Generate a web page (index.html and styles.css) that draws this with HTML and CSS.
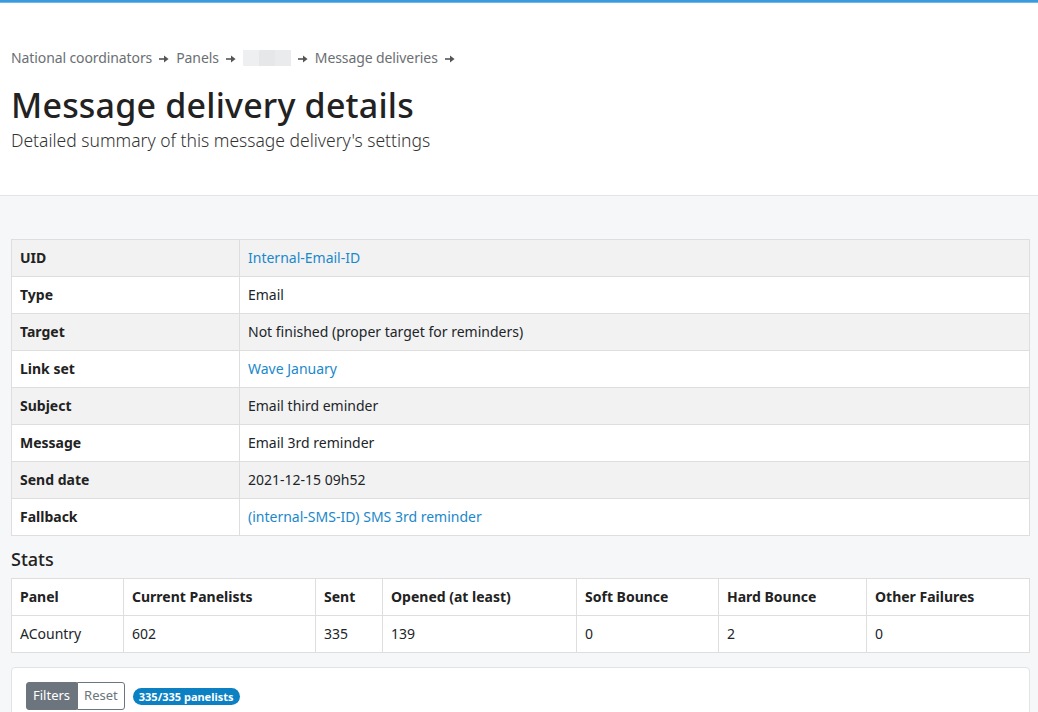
FILE: index.html
```html
<!DOCTYPE html>
<html lang="en">
<head>
<meta charset="utf-8">
<title>Message delivery details</title>
<link rel="stylesheet" href="styles.css">
</head>
<body>
<div class="topbar"></div>
<header class="hero">
  <nav class="breadcrumb">
    <a href="#">National coordinators</a><svg class="sep" viewBox="0 0 10 8"><path d="M0 4H6.5" /><path class="head" d="M5 0.6L9.6 4L5 7.4Z"/></svg>
    <a href="#">Panels</a><svg class="sep" viewBox="0 0 10 8"><path d="M0 4H6.5" /><path class="head" d="M5 0.6L9.6 4L5 7.4Z"/></svg>
    <span class="redacted"><i></i><i></i><i></i></span><svg class="sep" viewBox="0 0 10 8"><path d="M0 4H6.5" /><path class="head" d="M5 0.6L9.6 4L5 7.4Z"/></svg>
    <a href="#">Message deliveries</a><svg class="sep" viewBox="0 0 10 8"><path d="M0 4H6.5" /><path class="head" d="M5 0.6L9.6 4L5 7.4Z"/></svg>
  </nav>
  <h1 class="title">Message delivery details</h1>
  <p class="subtitle">Detailed summary of this message delivery's settings</p>
</header>
<main class="section">
  <table class="table details">
    <tbody>
      <tr><th>UID</th><td><a href="#">Internal-Email-ID</a></td></tr>
      <tr><th>Type</th><td>Email</td></tr>
      <tr><th>Target</th><td>Not finished (proper target for reminders)</td></tr>
      <tr><th>Link set</th><td><a href="#">Wave January</a></td></tr>
      <tr><th>Subject</th><td>Email third eminder</td></tr>
      <tr><th>Message</th><td>Email 3rd reminder</td></tr>
      <tr><th>Send date</th><td>2021-12-15 09h52</td></tr>
      <tr><th>Fallback</th><td><a href="#">(internal-SMS-ID) SMS 3rd reminder</a></td></tr>
    </tbody>
  </table>
  <h2 class="stats-title">Stats</h2>
  <table class="table stats">
    <thead>
      <tr><th>Panel</th><th>Current Panelists</th><th>Sent</th><th>Opened (at least)</th><th>Soft Bounce</th><th>Hard Bounce</th><th>Other Failures</th></tr>
    </thead>
    <tbody>
      <tr><td>ACountry</td><td>602</td><td>335</td><td>139</td><td>0</td><td>2</td><td>0</td></tr>
    </tbody>
  </table>
  <div class="card">
    <div class="toolbar">
      <div class="btn-group">
        <button class="btn btn-dark">Filters</button><button class="btn btn-outline">Reset</button>
      </div>
      <span class="badge">335/335 panelists</span>
    </div>
  </div>
</main>
</body>
</html>
```
FILE: styles.css
```css
* { box-sizing: border-box; }
html, body { margin: 0; padding: 0; }
body {
  font-family: "Noto Sans", "Open Sans", sans-serif;
  font-size: 14px;
  color: #212529;
  background: #f6f7f9;
  min-height: 712px;
  overflow: hidden;
}
a { color: #1a88cb; text-decoration: none; }

.topbar {
  height: 3px;
  background: #3a9bdc;
  border-bottom: 1px solid #6fb8e8;
}

.hero {
  background: #fff;
  border-bottom: 1px solid #e1e3e7;
  padding: 45px 11px 44px;
}
.breadcrumb {
  display: flex;
  align-items: center;
  line-height: 20px;
  font-size: 14px;
  color: #6b6f73;
  letter-spacing: -0.1px;
}
.breadcrumb a { color: #6b6f73; }
.breadcrumb .sep {
  width: 10px;
  height: 8px;
  margin: 1px 7px 0;
  flex: none;
}
.breadcrumb .sep path { stroke: #555; stroke-width: 1.6; fill: none; }
.breadcrumb .sep path.head { fill: #555; stroke: none; }
.redacted { display: inline-flex; height: 16px; }
.redacted i { display: block; width: 16px; height: 16px; background: #eeeff0; }
.redacted i:nth-child(2) { background: #e6e7e9; }
.redacted i:nth-child(3) { background: #eaebed; }

.title {
  margin: 17px 0 0;
  font-size: 34px;
  line-height: 40px;
  font-weight: 500;
  color: #222;
  letter-spacing: 0.2px;
}
.subtitle {
  margin: 4px 0 0;
  font-size: 17.5px;
  line-height: 22px;
  font-weight: 300;
  color: #333;
}

.section {
  padding: 43px 8px 0 11px;
}

.table {
  width: 100%;
  border-collapse: collapse;
  background: #fff;
}
.table th, .table td {
  border: 1px solid #dedede;
  padding: 8px;
  line-height: 20px;
  text-align: left;
  vertical-align: top;
  font-size: 14px;
}
.table th { font-weight: 700; color: #222; }

.details tr:nth-child(odd) { background: #f2f2f2; }
.details th { width: 228px; }

.stats-title {
  margin: 13px 0 9px;
  font-size: 18px;
  line-height: 20px;
  font-weight: 500;
  color: #222;
}
.stats th:nth-child(1) { width: 112px; }
.stats th:nth-child(2) { width: 192px; }
.stats th:nth-child(3) { width: 67px; }
.stats th:nth-child(4) { width: 194px; }
.stats th:nth-child(5) { width: 142px; }
.stats th:nth-child(6) { width: 148px; }

.card {
  margin-top: 14px;
  background: #fff;
  border: 1px solid #e2e3e5;
  border-radius: 4px;
  padding: 14px 14px 20px;
  height: 60px;
}
.toolbar { display: flex; align-items: center; gap: 8px; }
.btn-group { display: inline-flex; }
.btn {
  font-family: inherit;
  font-size: 13px;
  line-height: 17px;
  padding: 4px 6px 5px;
  border: 1px solid #6c757d;
  margin: 0;
  cursor: pointer;
}
.btn-dark { background: #6c757d; color: #fff; border-radius: 3px 0 0 3px; }
.btn-outline { background: #fff; color: #6c757d; border-radius: 0 3px 3px 0; }
.badge {
  display: inline-block;
  background: #0b80c3;
  color: #fff;
  font-size: 11px;
  font-weight: 700;
  line-height: 13px;
  padding: 2px 6px;
  border-radius: 10px;
}
```
